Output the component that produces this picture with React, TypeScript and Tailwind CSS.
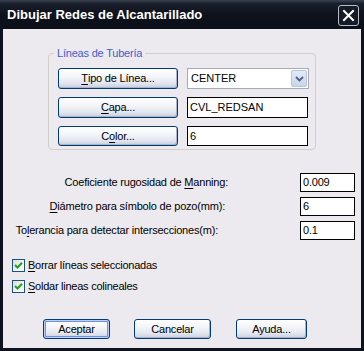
import React from "react";

const FONT = { fontFamily: '"Liberation Sans", Arial, sans-serif' };

function U({ children }: { children: React.ReactNode }) {
  return <span className="underline underline-offset-[2px] decoration-[1px]">{children}</span>;
}

function XPButton({
  children,
  className = "",
  isDefault = false,
}: {
  children: React.ReactNode;
  className?: string;
  isDefault?: boolean;
}) {
  return (
    <div
      className={`flex items-center justify-center rounded-[3px] border border-[#003c74] bg-[linear-gradient(180deg,#ffffff_0%,#f4f5f9_40%,#e2e6ef_75%,#c6cddd_100%)] text-[11px] leading-none tracking-[-0.2px] text-black ${
        isDefault ? "shadow-[inset_0_0_0_1px_#b9d1f7,inset_0_0_0_2px_#6f93e0]" : "shadow-[inset_-1px_-1px_0_#a9b4cc]"
      } ${className}`}
    >
      {children}
    </div>
  );
}

function TextBox({ value, className = "" }: { value: string; className?: string }) {
  return (
    <div className={`flex items-center border border-black bg-white pl-[2px] text-[11px] leading-none text-black ${className}`}>
      {value}
    </div>
  );
}

function CheckBox({ label }: { label: React.ReactNode }) {
  return (
    <div className="flex items-center gap-[3px] text-[11px] leading-none tracking-[-0.25px] text-black">
      <div className="flex h-[13px] w-[13px] items-center justify-center border border-[#1c5180] bg-[linear-gradient(135deg,#dcdcd7_0%,#f5f5f2_60%,#ffffff_100%)]">
        <svg width="9" height="9" viewBox="0 0 9 9">
          <path d="M1 4 L3.5 6.5 L8 1.8" fill="none" stroke="#21a121" strokeWidth="2" />
        </svg>
      </div>
      <span>{label}</span>
    </div>
  );
}

export default function App() {
  return (
    <div style={FONT} className="flex h-[351px] w-[364px] flex-col bg-[#0d121c]">
      {/* Title bar */}
      <div className="flex h-[29px] items-center justify-between bg-[linear-gradient(180deg,#3b4352_0%,#1a202c_12%,#0d121c_50%,#0a0f18_100%)] pl-[7px] pr-[5px]">
        <span className="text-[13px] font-bold text-white">Dibujar Redes de Alcantarillado</span>
        <div className="mt-[2px] flex h-[21px] w-[21px] items-center justify-center rounded-[3px] border border-[#b8bcc6] bg-[#141a26]">
          <svg width="13" height="13" viewBox="0 0 13 13">
            <path d="M2 2 L11 11 M11 2 L2 11" stroke="#ffffff" strokeWidth="2" strokeLinecap="square" />
          </svg>
        </div>
      </div>

      {/* Client area */}
      <div className="mx-[3px] mb-[3px] flex flex-1 flex-col bg-[#eceaef]">
        {/* Group box */}
        <div className="relative ml-[45px] mt-[24px] w-[268px] rounded-[4px] border border-[#d0d0c8] pb-[3px] pl-[9px] pr-[6px] pt-[14px]">
          <span className="absolute left-[5px] top-[-8px] bg-[#eceaef] px-[3px] text-[11px] leading-[14px] tracking-[-0.2px] text-[#3f5fc8]">
            Líneas de Tubería
          </span>
          <div className="flex flex-col gap-[8px]">
            <div className="flex items-center gap-[9px]">
              <XPButton className="h-[21px] w-[120px]">
                <U>T</U>ipo de Línea...
              </XPButton>
              <div className="flex h-[21px] w-[122px] items-center border border-[#a5acb5] bg-white pl-[3px] text-[11px] leading-none text-black">
                <span className="flex-1">CENTER</span>
                <div className="mr-[1px] flex h-[17px] w-[16px] items-center justify-center rounded-[2px] border border-[#b9c5da] bg-[linear-gradient(180deg,#e3eaf7_0%,#c9d5ea_100%)]">
                  <svg width="9" height="6" viewBox="0 0 9 6">
                    <path d="M1 1 L4.5 4.5 L8 1" fill="none" stroke="#4d6185" strokeWidth="1.8" />
                  </svg>
                </div>
              </div>
            </div>
            <div className="flex items-center gap-[9px]">
              <XPButton className="h-[21px] w-[120px]">
                <U>C</U>apa...
              </XPButton>
              <TextBox value="CVL_REDSAN" className="h-[21px] w-[121px]" />
            </div>
            <div className="flex items-center gap-[9px]">
              <XPButton className="h-[20px] w-[120px]">
                C<U>o</U>lor...
              </XPButton>
              <TextBox value="6" className="h-[20px] w-[121px]" />
            </div>
          </div>
        </div>

        {/* Parameters */}
        <div className="mt-[23px] flex flex-col gap-[5px] pr-[6px] tracking-[-0.2px]">
          <div className="flex items-center justify-end">
            <span className="mr-[72px] text-[11px] text-black">
              Coeficiente rugosidad de <U>M</U>anning:
            </span>
            <TextBox value="0.009" className="h-[19px] w-[55px]" />
          </div>
          <div className="flex items-center justify-end">
            <span className="mr-[75px] text-[11px] text-black">
              <U>D</U>iámetro para símbolo de pozo(mm):
            </span>
            <TextBox value="6" className="h-[19px] w-[55px]" />
          </div>
          <div className="flex items-center justify-end">
            <span className="mr-[82px] text-[11px] text-black">
              To<U>l</U>erancia para detectar intersecciones(m):
            </span>
            <TextBox value="0.1" className="h-[19px] w-[55px]" />
          </div>
        </div>

        {/* Checkboxes */}
        <div className="ml-[9px] mt-[19px] flex flex-col gap-[8px]">
          <CheckBox
            label={
              <>
                <U>B</U>orrar líneas seleccionadas
              </>
            }
          />
          <CheckBox
            label={
              <>
                <U>S</U>oldar lineas colineales
              </>
            }
          />
        </div>

        {/* Bottom buttons */}
        <div className="ml-[40px] mt-[26px] flex items-center">
          <XPButton isDefault className="h-[20px] w-[67px]">
            Aceptar
          </XPButton>
          <XPButton className="ml-[24px] h-[20px] w-[77px]">Cancelar</XPButton>
          <XPButton className="ml-[25px] h-[20px] w-[71px]">Ayuda...</XPButton>
        </div>
      </div>
    </div>
  );
}
